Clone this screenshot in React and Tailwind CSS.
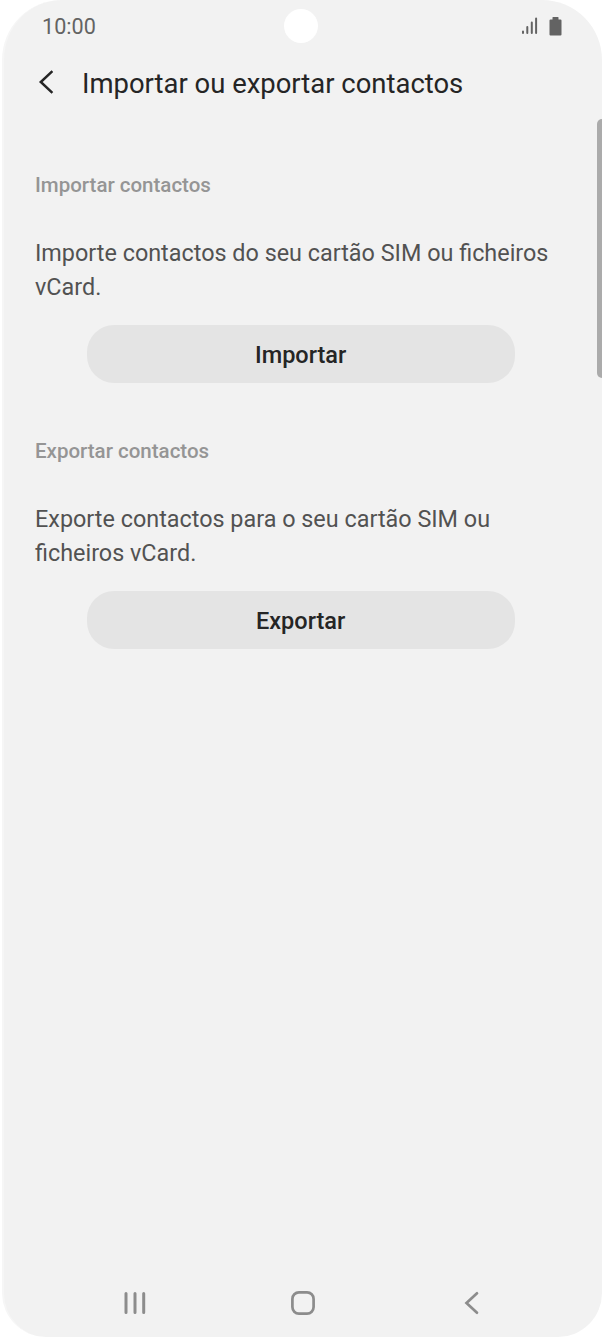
import React from 'react';

const sections = [
  {
    title: 'Importar contactos',
    lines: ['Importe contactos do seu cartão SIM ou ficheiros', 'vCard.'],
    action: 'Importar',
  },
  {
    title: 'Exportar contactos',
    lines: ['Exporte contactos para o seu cartão SIM ou', 'ficheiros vCard.'],
    action: 'Exportar',
  },
];

const StatusBar = () => (
  <div className="relative flex h-[52px] items-center justify-between pr-[40.5px] pl-[38px] text-[#636363]">
    <span className="pt-0.5 text-[21.6px] leading-[26px]">10:00</span>
    <div className="absolute left-[280px] top-[9px] h-[34px] w-[34px] rounded-full bg-white" />
    <div className="flex items-center gap-[11px]">
      <svg width="17" height="18" viewBox="0 0 17 18" stroke="currentColor" strokeWidth="2" strokeLinecap="round">
        <path d="M2 14.500v1.600M6.300 10v6.100M10.800 5.600v10.500M15.100 1.600v14.500" />
      </svg>
      <svg width="13" height="19" viewBox="0 0 13 19" fill="currentColor">
        <path d="M4 0h5q.5 0 .5.5v2h2q1 0 1 1v14q0 1-1 1h-10q-1 0-1-1v-14q0-1 1-1h2v-2q0-.5.5-.5z" />
      </svg>
    </div>
  </div>
);

const Header = () => (
  <header className="flex h-16 items-center pl-[34px] text-[#252525]">
    <button className="mr-7 pb-1">
      <svg width="16" height="24" viewBox="0 0 16 24" fill="none" stroke="currentColor" strokeWidth="2.500">
        <path d="M14.400 1.200L2.800 12l11.600 10.800" />
      </svg>
    </button>
    <h1 className="text-[27.45px] leading-8">Importar ou exportar contactos</h1>
  </header>
);

const Section = ({ title, lines, action }) => (
  <section className="mb-[56px]">
    <h2 className="text-[20.5px] leading-6 font-medium text-[#959595]">{title}</h2>
    <p className="mt-[40.3px] text-[23.38px] leading-[33.4px] text-[#525252]">
      {lines.map((line) => (
        <span key={line} className="block whitespace-nowrap">{line}</span>
      ))}
    </p>
    <button className="mt-[20.7px] ml-[51.7px] block h-[58.3px] w-[428px] rounded-[27px] bg-[#e4e4e4] pt-[3px] text-[23.5px] font-medium text-[#252525]">
      {action}
    </button>
  </section>
);

const NavBar = () => (
  <nav className="flex h-[68px] items-center pl-[119px] text-[#8c8c8c]">
    <svg width="24" height="24" viewBox="0 0 24 24" stroke="currentColor" strokeWidth="3" strokeLinecap="round">
      <path d="M3 2.500v19M12 2.500v19M20.700 2.500v19" />
    </svg>
    <svg className="ml-[143px]" width="26" height="26" viewBox="0 0 26 26" fill="none" stroke="currentColor" strokeWidth="2.700">
      <rect x="2.400" y="2.400" width="21.200" height="21.200" rx="6.500" />
    </svg>
    <svg className="ml-[147px]" width="16" height="24" viewBox="0 0 16 24" fill="none" stroke="currentColor" strokeWidth="2.700" strokeLinecap="round">
      <path d="M14 2.300L3.500 12l10.500 9.700" />
    </svg>
  </nav>
);

const App = () => {
  return (
    <div className="h-[1337px] w-[602px] overflow-hidden bg-white pl-0.5 font-[Roboto,sans-serif]">
      <div className="relative flex h-full flex-col overflow-hidden rounded-t-[60px] rounded-b-[44px] border-l-2 border-[#f6f6f6] bg-[#f2f2f2]">
        <StatusBar />
        <Header />
        <main className="flex-1 pt-[57px] pl-[31px]">
          {sections.map((section) => (
            <Section key={section.title} {...section} />
          ))}
        </main>
        <NavBar />
        {/* scroll indicator */}
        <div className="absolute top-[119px] right-0 h-[259px] w-[5.5px] rounded-l-[5px] bg-[#ababab]" />
      </div>
    </div>
  );
};

export default App;
